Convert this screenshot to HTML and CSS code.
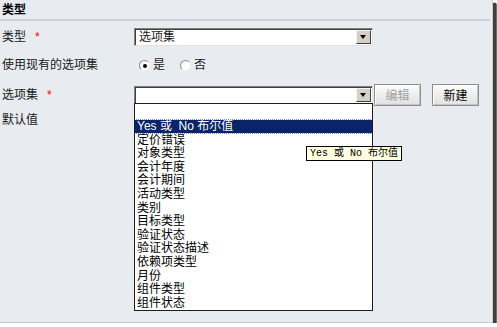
FILE: index.html
```html
<!DOCTYPE html>
<html lang="zh-CN">
<head>
    <meta charset="UTF-8">
    <title>类型</title>
    <link rel="stylesheet" href="styles.css">
</head>
<body>
    <div class="frame">
        <div class="section-title">类型</div>

        <div class="form">
            <div class="row row-type">
                <div class="label">类型<span class="req">*</span></div>
                <div class="select">
                    <span class="select-text">选项集</span>
                    <span class="arrow"></span>
                </div>
            </div>

            <div class="row row-existing">
                <div class="label">使用现有的选项集</div>
                <div class="radios">
                    <span class="radio checked"></span><span class="radio-text">是</span>
                    <span class="radio"></span><span class="radio-text">否</span>
                </div>
            </div>

            <div class="row row-set">
                <div class="label">选项集<span class="req">*</span></div>
                <div class="select">
                    <span class="select-text"></span>
                    <span class="arrow"></span>
                </div>
                <button class="btn" disabled>编辑</button>
                <button class="btn btn-new">新建</button>
            </div>

            <div class="row row-default">
                <div class="label">默认值</div>
            </div>
        </div>

        <!-- open dropdown of 选项集 -->
        <ul class="dropdown">
            <li class="empty"></li>
            <li class="selected">Yes 或&nbsp; No 布尔值</li>
            <li>定价错误</li>
            <li>对象类型</li>
            <li>会计年度</li>
            <li>会计期间</li>
            <li>活动类型</li>
            <li>类别</li>
            <li>目标类型</li>
            <li>验证状态</li>
            <li>验证状态描述</li>
            <li>依赖项类型</li>
            <li>月份</li>
            <li>组件类型</li>
            <li>组件状态</li>
        </ul>

        <div class="tooltip">Yes 或 No 布尔值</div>
    </div>
</body>
</html>
```

FILE: styles.css
```css
* {
    margin: 0;
    padding: 0;
    box-sizing: border-box;
}
body {
    background: #ffffff;
    font-family: "Liberation Sans", "Noto Sans CJK SC", sans-serif;
    font-size: 12px;
    color: #1a1a1a;
}
/* Window frame with drop shadow */
.frame {
    position: relative;
    width: 493px;
    height: 323px;
    background: #e8ebf0;
    border-right: 1px solid #c9cdd3;
    border-bottom: 1px solid #c9cdd3;
    box-shadow: 3px 3px 1px #3f3f3f, 4px 4px 1px #7a7a7a;
    overflow: hidden;
}
/* Section heading */
.section-title {
    height: 21px;
    padding: 3px 0 0 2px;
    font-weight: bold;
    font-size: 12px;
    line-height: 15px;
    color: #000;
    border-bottom: 2px solid #cdd1d7;
    margin-right: 2px;
}
/* Form rows */
.form {
    padding-top: 6px;
}
.row {
    display: flex;
    align-items: center;
}
.row-type {
    height: 20px;
}
.row-existing {
    height: 36px;
}
.row-set {
    height: 23px;
}
.row-default {
    height: 30px;
    align-items: flex-start;
    padding-top: 7px;
}
.label {
    width: 134px;
    padding-left: 2px;
    line-height: 14px;
    white-space: nowrap;
}
.req {
    color: #ff0000;
    margin-left: 9px;
}
/* Select box */
.select {
    display: flex;
    align-items: center;
    width: 239px;
    height: 18px;
    background: #ffffff;
    border-top: 1px solid #808080;
    border-left: 1px solid #808080;
    border-right: 1px solid #e2e2e2;
    border-bottom: 1px solid #e2e2e2;
    box-shadow: inset 1px 1px 0 #404040;
}
.select-text {
    flex: 1;
    padding-left: 4px;
    line-height: 14px;
}
.arrow {
    position: relative;
    width: 15px;
    height: 14px;
    margin-right: 1px;
    background: #d4d0c8;
    border-top: 1px solid #f4f4f4;
    border-left: 1px solid #f4f4f4;
    border-right: 1px solid #404040;
    border-bottom: 1px solid #404040;
}
.arrow::after {
    content: "";
    position: absolute;
    left: 3px;
    top: 4px;
    border-left: 3.5px solid transparent;
    border-right: 3.5px solid transparent;
    border-top: 4px solid #000;
}
/* Radio buttons */
.radios {
    display: flex;
    align-items: center;
    padding-left: 5px;
}
.radio {
    position: relative;
    width: 11px;
    height: 11px;
    border-radius: 50%;
    background: #ffffff;
    border: 1px solid #8c8c8c;
    border-right-color: #f0f0f0;
    border-bottom-color: #f0f0f0;
}
.radio.checked::after {
    content: "";
    position: absolute;
    left: 3px;
    top: 3px;
    width: 4px;
    height: 4px;
    border-radius: 50%;
    background: #000;
}
.radio-text {
    margin-left: 3px;
    margin-right: 15px;
    line-height: 14px;
}
/* Buttons */
.btn {
    width: 47px;
    height: 22px;
    margin-left: 1px;
    font-family: inherit;
    font-size: 12px;
    color: #000;
    background: linear-gradient(#fbfbfb, #e1e1e1);
    border: 1px solid #8d8d8d;
    box-shadow: inset 1px 1px 0 #ffffff, inset -1px -1px 0 #c4c4c4;
}
.btn:disabled {
    color: #a3a3a3;
}
.btn-new {
    margin-left: 11px;
}
/* Open dropdown list (overlay) */
.dropdown {
    position: absolute;
    left: 134px;
    top: 103px;
    width: 239px;
    height: 208px;
    list-style: none;
    background: #ffffff;
    border: 1px solid #1c1c1c;
    overflow: hidden;
}
.dropdown li {
    height: 13.6px;
    line-height: 13px;
    padding-left: 2px;
    white-space: nowrap;
    color: #000;
}
.dropdown li.empty {
    height: 16px;
}
.dropdown li.selected {
    height: 12.6px;
    margin-bottom: 1px;
    background: #0a246a;
    color: #ffffff;
    outline: 1px dotted #7d8fb8;
}
/* Tooltip */
.tooltip {
    position: absolute;
    left: 306px;
    top: 146px;
    height: 15px;
    padding: 0 3px;
    font-family: "Liberation Mono", "Noto Sans CJK SC", monospace;
    font-size: 10px;
    line-height: 13px;
    color: #000;
    background: #ffffe1;
    border: 1px solid #000;
    white-space: nowrap;
}
```
